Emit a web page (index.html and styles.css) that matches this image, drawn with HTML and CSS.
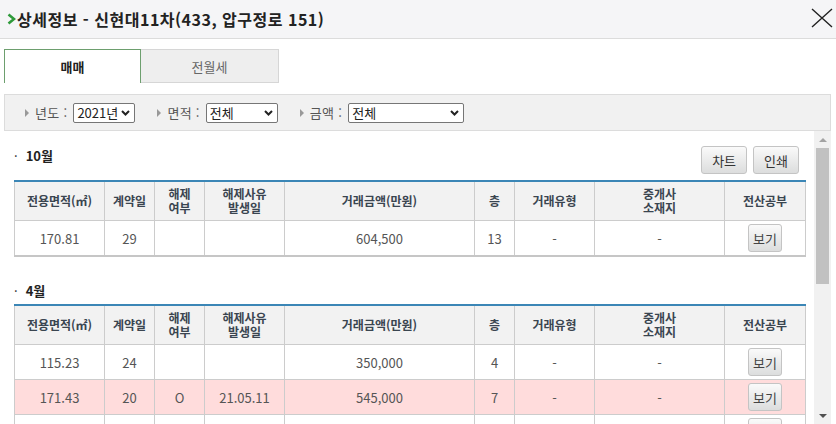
FILE: index.html
```html
<!DOCTYPE html>
<html lang="ko">
<head>
  <meta charset="UTF-8" />
  <title>상세정보</title>
  <link rel="stylesheet" href="styles.css">
</head>
<body>
  <div class="popup">
    <div class="popup-head">
      <h1 class="popup-title">
        <svg class="chev" width="9" height="12" viewBox="0 0 9 12"><polyline points="1.5,1.5 7,6 1.5,10.5" fill="none" stroke="#2f9a3b" stroke-width="2.6"/></svg>
        상세정보 - 신현대11차(433, 압구정로 151)
      </h1>
      <button class="close" type="button">
        <svg width="22" height="20" viewBox="0 0 22 20"><path d="M1 1 L21 19 M21 1 L1 19" stroke="#222" stroke-width="1.4" fill="none"/></svg>
      </button>
    </div>

    <div class="tabs">
      <a class="tab on">매매</a>
      <a class="tab">전월세</a>
    </div>

    <div class="filter">
      <div class="filter-item">
        <span class="arr"></span>
        <span class="lbl">년도 :</span>
        <span class="sel w-year">
          <select><option>2021년</option></select>
          <svg width="9" height="6" viewBox="0 0 9 6"><polyline points="1,1 4.5,4.5 8,1" fill="none" stroke="#222" stroke-width="2"/></svg>
        </span>
      </div>
      <div class="filter-item">
        <span class="arr"></span>
        <span class="lbl">면적 :</span>
        <span class="sel w-area">
          <select><option>전체</option></select>
          <svg width="9" height="6" viewBox="0 0 9 6"><polyline points="1,1 4.5,4.5 8,1" fill="none" stroke="#222" stroke-width="2"/></svg>
        </span>
      </div>
      <div class="filter-item">
        <span class="arr"></span>
        <span class="lbl">금액 :</span>
        <span class="sel w-price">
          <select><option>전체</option></select>
          <svg width="9" height="6" viewBox="0 0 9 6"><polyline points="1,1 4.5,4.5 8,1" fill="none" stroke="#222" stroke-width="2"/></svg>
        </span>
      </div>
    </div>

    <div class="list-wrap">
      <div class="list">
        <div class="month">
          <div class="month-head">
            <h2 class="month-title">10월</h2>
            <div class="btns">
              <button class="btn" type="button">차트</button>
              <button class="btn" type="button">인쇄</button>
            </div>
          </div>
          <table class="deal">
            <colgroup>
              <col style="width:90px"><col style="width:50px"><col style="width:50px"><col style="width:80px">
              <col style="width:190px"><col style="width:40px"><col style="width:80px"><col style="width:130px"><col style="width:81px">
            </colgroup>
            <thead>
              <tr>
                <th>전용면적(㎡)</th><th>계약일</th><th>해제<br>여부</th><th>해제사유<br>발생일</th>
                <th>거래금액(만원)</th><th>층</th><th>거래유형</th><th>중개사<br>소재지</th><th>전산공부</th>
              </tr>
            </thead>
            <tbody>
              <tr>
                <td>170.81</td><td>29</td><td></td><td></td><td>604,500</td><td>13</td><td>-</td><td>-</td>
                <td><button class="btn view" type="button">보기</button></td>
              </tr>
            </tbody>
          </table>
        </div>

        <div class="month">
          <div class="month-head">
            <h2 class="month-title">4월</h2>
          </div>
          <table class="deal">
            <colgroup>
              <col style="width:90px"><col style="width:50px"><col style="width:50px"><col style="width:80px">
              <col style="width:190px"><col style="width:40px"><col style="width:80px"><col style="width:130px"><col style="width:81px">
            </colgroup>
            <thead>
              <tr>
                <th>전용면적(㎡)</th><th>계약일</th><th>해제<br>여부</th><th>해제사유<br>발생일</th>
                <th>거래금액(만원)</th><th>층</th><th>거래유형</th><th>중개사<br>소재지</th><th>전산공부</th>
              </tr>
            </thead>
            <tbody>
              <tr>
                <td>115.23</td><td>24</td><td></td><td></td><td>350,000</td><td>4</td><td>-</td><td>-</td>
                <td><button class="btn view" type="button">보기</button></td>
              </tr>
              <tr class="cancel">
                <td>171.43</td><td>20</td><td>O</td><td>21.05.11</td><td>545,000</td><td>7</td><td>-</td><td>-</td>
                <td><button class="btn view" type="button">보기</button></td>
              </tr>
              <tr>
                <td>115.23</td><td>17</td><td></td><td></td><td>342,000</td><td>9</td><td>-</td><td>-</td>
                <td><button class="btn view" type="button">보기</button></td>
              </tr>
            </tbody>
          </table>
        </div>
      </div>

      <div class="scrollbar">
        <span class="sb-btn"><span class="tri-up"></span></span>
        <div class="sb-track"><div class="sb-thumb"></div></div>
        <span class="sb-btn"><span class="tri-down"></span></span>
      </div>
    </div>
  </div>
</body>
</html>
```

FILE: styles.css
```css
body {
  margin: 0;
  font-family: "Noto Sans CJK KR", "Noto Sans", sans-serif;
  color: #333;
  background: #fff;
}

.popup {
  height: 100vh;
  display: flex;
  flex-direction: column;
}

/* header */
.popup-head {
  flex: none;
  height: 38px;
  background: #f5f5f7;
  border-bottom: 1px solid #dcdcdc;
  display: flex;
  align-items: center;
  justify-content: space-between;
  padding: 0 3px 0 7px;
}

.popup-title {
  margin: 0;
  font-size: 16px;
  font-weight: 700;
  color: #222;
  display: flex;
  align-items: center;
  gap: 1px;
  line-height: 20px;
  letter-spacing: 0.5px;
}

.close {
  border: 0;
  background: none;
  padding: 0;
  margin-top: -3px;
  cursor: pointer;
}

.close svg {
  display: block;
}

/* tabs */
.tabs {
  flex: none;
  display: flex;
  margin: 10px 0 0 4px;
}

.tab {
  box-sizing: border-box;
  width: 138px;
  height: 34px;
  display: flex;
  align-items: center;
  justify-content: center;
  font-size: 13px;
  color: #666;
  background: #eee;
  border: 1px solid #d6d6d6;
  border-left: 0;
}

.tab.on {
  width: 137px;
  background: #fff;
  color: #222;
  font-weight: 700;
  border: 1px solid #6d9f6e;
  border-bottom: 0;
}

/* filter bar */
.filter {
  flex: none;
  box-sizing: border-box;
  height: 37px;
  margin: 11px 5px 0 4px;
  border: 1px solid #dcdcdc;
  background: #f1f1f1;
  display: flex;
  align-items: center;
  gap: 22px;
  padding-left: 20px;
  font-size: 13px;
  color: #555;
}

.filter-item {
  display: flex;
  align-items: center;
}

.arr {
  width: 0;
  height: 0;
  border-left: 4px solid #999;
  border-top: 4px solid transparent;
  border-bottom: 4px solid transparent;
  margin-right: 6px;
}

.lbl {
  margin-right: 6px;
  white-space: nowrap;
  letter-spacing: 0.3px;
}

.sel {
  position: relative;
  display: inline-block;
}

.sel select {
  appearance: none;
  -webkit-appearance: none;
  box-sizing: border-box;
  display: block;
  width: 100%;
  height: 20px;
  border: 1px solid #767676;
  border-radius: 2px;
  background: #fff;
  padding: 0 0 0 3px;
  font-family: "Noto Sans CJK KR", sans-serif;
  font-size: 13px;
  color: #222;
  line-height: 18px;
}

.sel svg {
  position: absolute;
  right: 5px;
  top: 7px;
  pointer-events: none;
}

.w-year { width: 62px; }
.w-area { width: 72px; }
.w-price { width: 116px; }

/* list + scrollbar */
.list-wrap {
  flex: 1;
  min-height: 0;
  display: flex;
}

.list {
  flex: 1;
  overflow: hidden;
  padding: 15px 0 0 14px;
}

.scrollbar {
  flex: none;
  width: 17px;
  margin-right: 5px;
  background: #f1f1f1;
  display: flex;
  flex-direction: column;
}

.sb-btn {
  height: 17px;
  display: flex;
  align-items: center;
  justify-content: center;
}

.tri-up,
.tri-down {
  width: 0;
  height: 0;
  border-left: 4px solid transparent;
  border-right: 4px solid transparent;
}

.tri-up {
  border-bottom: 4px solid #a3a3a3;
}

.tri-down {
  border-top: 4px solid #505050;
}

.sb-track {
  flex: 1;
  padding: 0 2px;
}

.sb-thumb {
  height: 136px;
  background: #c1c1c1;
}

.month {
  width: 791px;
}

.month + .month {
  margin-top: 24px;
}

.month-head {
  display: flex;
  justify-content: space-between;
  align-items: flex-start;
  margin-bottom: 3px;
}

.month-title {
  margin: 0;
  font-size: 13px;
  font-weight: 700;
  line-height: 20px;
  color: #222;
}

.month-title::before {
  content: "·";
  font-weight: 400;
  margin-right: 8px;
}

.btns {
  display: flex;
  gap: 6px;
  margin: 0 6px 3px 0;
}

.btn {
  box-sizing: border-box;
  height: 28px;
  padding: 0 10px;
  border: 1px solid #c4c4c4;
  border-radius: 3px;
  background: linear-gradient(#fafafa, #dcdddd);
  font-family: "Noto Sans CJK KR", sans-serif;
  font-size: 13px;
  color: #333;
  cursor: pointer;
}

.btn.view {
  width: 34px;
  padding: 0;
  color: #444;
  vertical-align: middle;
}

/* tables */
.deal {
  width: 791px;
  table-layout: fixed;
  border-collapse: collapse;
  border-top: 2px solid #3b86b6;
  border-bottom: 2px solid #c6c6c6;
}

.deal th {
  height: 38px;
  padding: 0;
  background: #f2f2f2;
  border: 1px solid #ccc;
  border-top: 0;
  font-size: 12px;
  font-weight: 700;
  line-height: 14px;
  color: #3a4550;
}

.deal td {
  height: 34px;
  padding: 0;
  border: 1px solid #ccc;
  text-align: center;
  font-size: 13px;
  color: #555;
}

.deal tr.cancel td {
  background: #ffdcdc;
}
```
